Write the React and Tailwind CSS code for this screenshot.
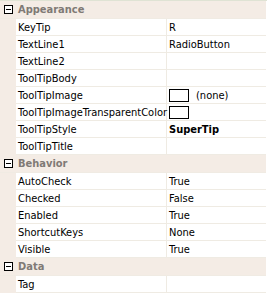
import React from 'react';

const groups = [
  {
    name: 'Appearance',
    rows: [
      { name: 'KeyTip', value: 'R' },
      { name: 'TextLine1', value: 'RadioButton' },
      { name: 'TextLine2', value: '' },
      { name: 'ToolTipBody', value: '' },
      { name: 'ToolTipImage', value: '(none)', swatch: true },
      { name: 'ToolTipImageTransparentColor', value: '', swatch: true },
      { name: 'ToolTipStyle', value: 'SuperTip', bold: true },
      { name: 'ToolTipTitle', value: '' },
    ],
  },
  {
    name: 'Behavior',
    rows: [
      { name: 'AutoCheck', value: 'True' },
      { name: 'Checked', value: 'False' },
      { name: 'Enabled', value: 'True' },
      { name: 'ShortcutKeys', value: 'None' },
      { name: 'Visible', value: 'True' },
    ],
  },
  {
    name: 'Data',
    rows: [{ name: 'Tag', value: '' }],
  },
];

function MinusBox() {
  return (
    <div className="w-[9px] h-[9px] border border-black bg-white flex items-center justify-center shrink-0">
      <div className="w-[5px] h-px bg-black" />
    </div>
  );
}

function Category({ name }) {
  return (
    <div className="h-[18px] flex items-center bg-[#f4ece5] border-b border-[#f0ebe3]">
      <div className="w-[16px] flex justify-center pl-px">
        <MinusBox />
      </div>
      <span className="pl-[2px] font-bold text-[#807a75]">{name}</span>
    </div>
  );
}

function Row({ row }) {
  return (
    <div className="h-[17px] flex bg-[#f4ece5]">
      <div className="w-[16px] shrink-0" />
      <div className="flex-1 flex bg-white border-b border-[#efebe3]">
        <div className="w-[150px] shrink-0 pl-[2px] flex items-center whitespace-nowrap overflow-visible relative z-10">
          {row.name}
        </div>
        <div className="w-px bg-[#efebe3] shrink-0" />
        <div className="flex-1 flex items-center pl-[2px] whitespace-nowrap">
          {row.swatch && (
            <div className="w-[20px] h-[13px] border border-black bg-white mr-[7px] shrink-0" />
          )}
          <span className={row.bold ? 'font-bold' : ''}>{row.value}</span>
        </div>
      </div>
    </div>
  );
}

export default function App() {
  return (
    <div className="w-[267px] h-[295px] bg-white overflow-hidden text-[11px] text-black font-['DejaVu_Sans_Condensed','Liberation_Sans',sans-serif] leading-none">
      <div className="border-t border-[#dfe3d4] pr-px bg-white">
        {groups.map((g) => (
          <div key={g.name}>
            <Category name={g.name} />
            {g.rows.map((r) => (
              <Row key={r.name} row={r} />
            ))}
          </div>
        ))}
      </div>
    </div>
  );
}
